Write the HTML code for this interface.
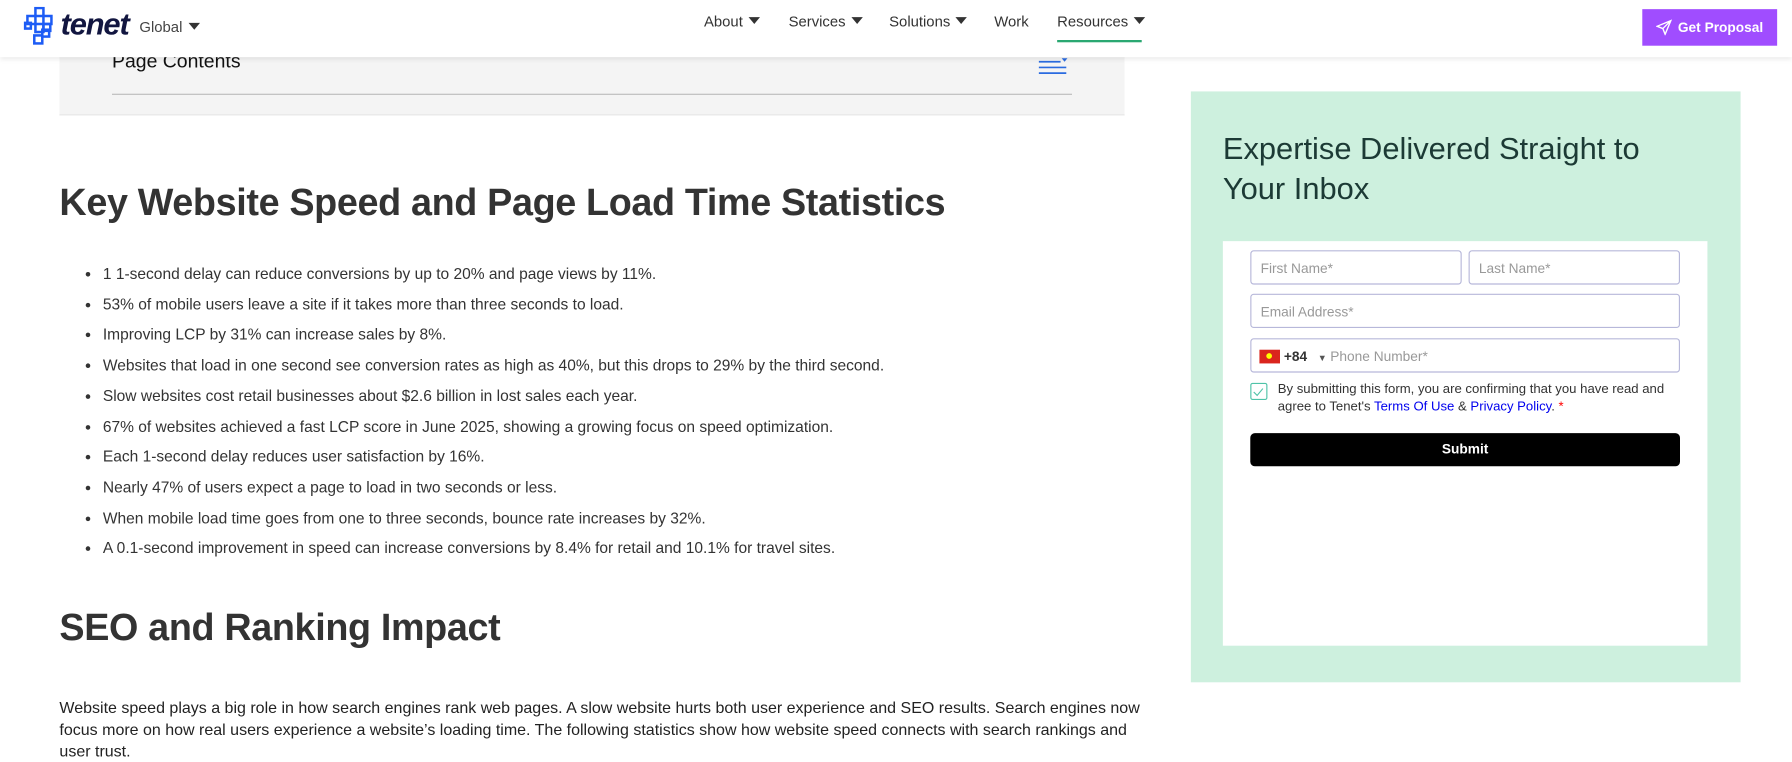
<!DOCTYPE html>
<html><head><meta charset="utf-8"><style>
*{box-sizing:border-box;margin:0;padding:0}
html,body{width:1792px;height:761px;overflow:hidden;background:#fff}
body{font-family:"Liberation Sans",sans-serif;color:#2b2b2b}
#w{position:absolute;left:0;top:0;width:1568px;height:666px;transform:scale(1.142857);transform-origin:0 0}
.hdr{position:absolute;top:0;left:0;width:1568px;height:50px;background:#fff;box-shadow:0 2px 4px rgba(0,0,0,.08);z-index:5}
.logo{position:absolute;left:20px;top:6px}
.logotxt{position:absolute;left:53px;top:6px;font-weight:bold;font-style:italic;font-size:27px;color:#121640;letter-spacing:-1px}
.glob{position:absolute;left:122px;top:16px;font-size:13px;color:#444}
.tri{display:inline-block;width:0;height:0;border-left:5px solid transparent;border-right:5px solid transparent;border-top:6px solid #333;margin-left:5px;vertical-align:2px}
.nav{position:absolute;top:11px;font-size:13px;color:#333}
.btn{position:absolute;left:1437px;top:8px;width:118px;height:32px;background:#a04dff;color:#fff;font-size:12px;font-weight:bold;display:flex;align-items:center;justify-content:center;gap:5px}
.pc{position:absolute;left:52px;top:40px;width:932px;height:61px;background:#f4f4f4;border-bottom:1px solid #e6e6e6}
.pc span{position:absolute;left:46px;top:4px;font-size:17px;color:#111}
.pc .ln{position:absolute;left:46px;right:46px;top:42px;border-top:1px solid #bbb}
h2{position:absolute;left:52px;font-size:33px;font-weight:bold;color:#333;letter-spacing:-.3px}
ul{position:absolute;left:90px;top:227px;font-size:13.6px;color:#333;line-height:26.7px}
p.t{position:absolute;left:52px;top:610px;width:950px;font-size:14px;line-height:19px;color:#222}
.side{position:absolute;left:1042px;top:80px;width:481px;height:517px;background:#cdf0de}
.side h3{position:absolute;left:28px;top:33px;font-size:27px;font-weight:normal;color:#1c3a35;line-height:35px}
.form{position:absolute;left:28px;top:131px;width:424px;height:354px;background:#fff}
.in{position:absolute;height:30px;border:1px solid #b7b8da;border-radius:3px;font-size:12px;color:#999;padding:8px 8px}
.sub{position:absolute;left:24px;top:168px;width:376px;height:29px;background:#000;border-radius:4px;color:#fff;font-size:12px;font-weight:bold;text-align:center;line-height:29px}
a{color:#0000ee}
</style></head><body><div id="w">
<div class="hdr">
<svg class="logo" width="34" height="34" viewBox="0 0 34 34"><g fill="none" stroke="#1d5cf5" stroke-width="2.2"><rect x="11" y="1" width="7" height="7"/><rect x="18" y="8" width="7" height="7"/><rect x="4" y="8" width="7" height="7"/><rect x="11" y="15" width="7" height="7"/><rect x="2" y="14" width="5" height="5"/><rect x="18" y="15" width="6" height="6"/><rect x="10" y="25" width="7" height="7"/><rect x="17" y="20" width="6" height="6"/></g></svg>
<div class="logotxt">tenet</div>
<div class="glob">Global<span class="tri"></span></div>
<div class="nav" style="left:616px">About<span class="tri"></span></div>
<div class="nav" style="left:690px">Services<span class="tri"></span></div>
<div class="nav" style="left:778px">Solutions<span class="tri"></span></div>
<div class="nav" style="left:870px">Work</div>
<div class="nav" style="left:925px">Resources<span class="tri"></span></div>
<div style="position:absolute;left:925px;top:35px;width:74px;height:2px;background:#2aa872"></div>
<div class="btn"><svg width="14" height="14" viewBox="0 0 14 14" fill="none" stroke="#fff" stroke-width="1.2"><path d="M13 1L1 6l5 2 2 5z M6 8l7-7"/></svg>Get Proposal</div>
</div>
<div class="pc"><span>Page Contents</span><div class="ln"></div>
<svg style="position:absolute;left:856px;top:10px" width="28" height="16"><g stroke="#2a6be0" stroke-width="1.5"><line x1="1" y1="4" x2="20" y2="4"/><line x1="1" y1="9" x2="25" y2="9"/><line x1="1" y1="14" x2="25" y2="14"/></g><path d="M21 1h5l-2.5 3z" fill="#2a6be0"/></svg>
</div>
<h2 style="top:158px">Key Website Speed and Page Load Time Statistics</h2>
<ul>
<li>1 1-second delay can reduce conversions by up to 20% and page views by 11%.</li>
<li>53% of mobile users leave a site if it takes more than three seconds to load.</li>
<li>Improving LCP by 31% can increase sales by 8%.</li>
<li>Websites that load in one second see conversion rates as high as 40%, but this drops to 29% by the third second.</li>
<li>Slow websites cost retail businesses about $2.6 billion in lost sales each year.</li>
<li>67% of websites achieved a fast LCP score in June 2025, showing a growing focus on speed optimization.</li>
<li>Each 1-second delay reduces user satisfaction by 16%.</li>
<li>Nearly 47% of users expect a page to load in two seconds or less.</li>
<li>When mobile load time goes from one to three seconds, bounce rate increases by 32%.</li>
<li>A 0.1-second improvement in speed can increase conversions by 8.4% for retail and 10.1% for travel sites.</li>
</ul>
<h2 style="top:530px">SEO and Ranking Impact</h2>
<p class="t">Website speed plays a big role in how search engines rank web pages. A slow website hurts both user experience and SEO results. Search engines now focus more on how real users experience a website’s loading time. The following statistics show how website speed connects with search rankings and user trust.</p>
<div class="side"><h3>Expertise Delivered Straight to<br>Your Inbox</h3>
<div class="form">
<div class="in" style="left:24px;top:8px;width:185px">First Name*</div>
<div class="in" style="left:215px;top:8px;width:185px">Last Name*</div>
<div class="in" style="left:24px;top:46px;width:376px">Email Address*</div>
<div class="in" style="left:24px;top:85px;width:376px;padding-left:7px"><span style="display:inline-block;width:18px;height:12px;background:#da251d;vertical-align:-2px;position:relative"><span style="position:absolute;left:6px;top:3px;width:5px;height:5px;background:#ff0;border-radius:50%"></span></span> <b style="color:#333;font-weight:bold">+84</b> <span style="color:#555;font-size:8px;margin:0 3px 0 6px">▼</span>Phone Number*</div>
<div style="position:absolute;left:24px;top:124px;width:15px;height:15px;border:1.5px solid #4fc3a8;border-radius:2px"><svg width="12" height="12" viewBox="0 0 12 12"><path d="M2 6l3 3 5-6" fill="none" stroke="#4fc3a8" stroke-width="1"/></svg></div>
<div style="position:absolute;left:48px;top:123px;font-size:11.5px;line-height:15px;color:#333;width:360px">By submitting this form, you are confirming that you have read and agree to Tenet's <a>Terms Of Use</a> &amp; <a>Privacy Policy</a>. <span style="color:red">*</span></div>
<div class="sub">Submit</div>
</div></div>
</div></body></html>
